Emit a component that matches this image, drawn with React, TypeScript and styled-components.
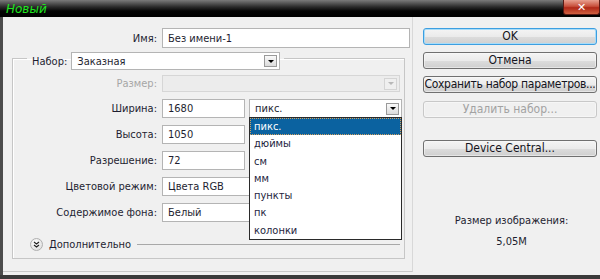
import React from 'react';
import styled, { createGlobalStyle, css } from 'styled-components';

const GlobalStyle = createGlobalStyle`
  html, body {
    margin: 0;
    padding: 0;
    background: #3c3c3c;
  }
  body {
    font-family: "DejaVu Sans Condensed", "DejaVu Sans", sans-serif;
    font-size: 11px;
    color: #1e1e30;
  }
`;

const units = ['пикс.', 'дюймы', 'см', 'мм', 'пункты', 'пк', 'колонки'];

const Window = styled.div`
  width: 600px;
  height: 279px;
  display: flex;
  flex-direction: column;
  background: #3a3a3a;
  overflow: hidden;
`;

const TitleBar = styled.div`
  height: 17px;
  flex-shrink: 0;
  display: flex;
  align-items: flex-start;
  justify-content: space-between;
  background: linear-gradient(#7a7a7a 0px, #2a2a2a 7px, #050505 11px, #000 17px);
`;

const Title = styled.span`
  padding: 2px 0 0 6px;
  color: #1ee61e;
  font-family: "DejaVu Sans", sans-serif;
  font-style: italic;
  font-size: 12px;
  line-height: 14px;
`;

const CloseButton = styled.div`
  width: 37px;
  height: 15px;
  display: flex;
  align-items: center;
  justify-content: center;
  border-radius: 0 0 3px 3px;
  border: 1px solid #5a1a14;
  border-top: none;
  box-sizing: border-box;
  background: linear-gradient(#e8a090, #c8503c 45%, #b02818 55%, #d06040);
  color: #fff;
  font-family: "DejaVu Sans", sans-serif;
  font-weight: bold;
  font-size: 11px;
`;

const Frame = styled.div`
  flex: 1;
  display: flex;
  margin-bottom: 4px;
  background: #f0f0f0;
  border-left: 3px solid #4c4c4c;
`;

const LeftPanel = styled.div`
  width: 410px;
  box-sizing: border-box;
  padding-top: 11px;
  border-right: 1px solid #d8d8d8;
  border-bottom: 1px solid #c8c8c8;
  margin-bottom: 3px;
  display: flex;
  flex-direction: column;
`;

const Row = styled.div<{ $h?: number }>`
  display: grid;
  grid-template-columns: 144px auto auto;
  column-gap: 5px;
  align-items: center;
  height: ${(p) => p.$h ?? 19}px;
  justify-content: start;
`;

const NameRow = styled(Row)`
  grid-template-columns: 154px 248px;
  height: 20px;
`;

const Label = styled.span<{ $disabled?: boolean }>`
  text-align: right;
  white-space: nowrap;
  color: ${(p) => (p.$disabled ? '#a6a6a6' : '#1e1e30')};
`;

const Field = styled.div<{ $w: number; $disabled?: boolean }>`
  width: ${(p) => p.$w}px;
  height: 100%;
  box-sizing: border-box;
  display: flex;
  align-items: center;
  justify-content: space-between;
  padding: 0 2px 0 5px;
  background: ${(p) => (p.$disabled ? '#ececec' : '#fff')};
  border: 1px solid ${(p) => (p.$disabled ? '#d6d6d6' : '#b4b4b4')};
  white-space: nowrap;
  overflow: hidden;
`;

const ArrowBox = styled.span<{ $disabled?: boolean }>`
  width: 13px;
  height: 12px;
  box-sizing: border-box;
  display: flex;
  align-items: center;
  justify-content: center;
  border: 1px solid ${(p) => (p.$disabled ? '#d4d4d4' : '#9a9a9a')};
  background: ${(p) => (p.$disabled ? '#efefef' : 'linear-gradient(#fafafa, #dcdcdc)')};
  &::after {
    content: '';
    border-left: 3px solid transparent;
    border-right: 3px solid transparent;
    border-top: 3px solid ${(p) => (p.$disabled ? '#b8b8b8' : '#000')};
  }
`;

const Group = styled.fieldset`
  margin: -1px 7px 0 9px;
  padding: 0;
  border: 1px solid #c6c6c6;
  box-shadow: inset 1px 1px 0 #fff;
  height: 212px;
  box-sizing: border-box;
  min-width: 0;
`;

const Legend = styled.legend`
  margin-left: 14px;
  padding: 5px 4px 0 5px;
  display: flex;
  align-items: center;
  gap: 4px;
  height: 18px;
  box-sizing: content-box;
`;

const SetField = styled(Field)`
  height: 18px;
`;

const Rows = styled.div`
  margin-top: 5px;
  display: flex;
  flex-direction: column;
  gap: 7px;
`;

const UnitWrap = styled.div`
  position: relative;
  height: 100%;
  margin-left: -1px;
`;

const List = styled.ul`
  position: absolute;
  top: 18px;
  left: 0;
  width: 153px;
  margin: 0;
  padding: 0;
  list-style: none;
  background: #fff;
  border: 1px solid #2a2a2a;
  box-sizing: border-box;
  z-index: 2;
`;

const Item = styled.li<{ $selected?: boolean }>`
  height: 17.3px;
  line-height: 17px;
  padding-left: 4px;
  color: #1e1e40;
  ${(p) =>
    p.$selected &&
    css`
      background: #0b62a0;
      color: #fff;
      outline: 1px dotted #d0a060;
      outline-offset: -1px;
    `}
`;

const MoreRow = styled.div`
  display: flex;
  align-items: center;
  gap: 6px;
  margin: 16px 0 0 17px;
`;

const Chevron = styled.span`
  width: 11px;
  height: 11px;
  border-radius: 50%;
  background: radial-gradient(circle at 40% 35%, #fff, #d8d8d8);
  border: 1px solid #b0b0b0;
  display: flex;
  align-items: center;
  justify-content: center;
`;

const Rule = styled.span`
  flex: 1;
  height: 1px;
  margin-right: 4px;
  background: #a8a8a8;
`;

const RightPanel = styled.div`
  flex: 1;
  padding: 11px 3px 0 10px;
  display: flex;
  flex-direction: column;
  align-items: stretch;
`;

const Button = styled.div<{ $primary?: boolean; $disabled?: boolean; $gap?: number; $tight?: boolean }>`
  height: 17px;
  margin-top: ${(p) => p.$gap ?? 7}px;
  box-sizing: border-box;
  border: 1px solid ${(p) => (p.$primary ? '#3c9ee0' : p.$disabled ? '#c8c8c8' : '#707070')};
  border-radius: 3px;
  background: ${(p) =>
    p.$disabled ? '#f0f0f0' : 'linear-gradient(#f4f4f4 0%, #ebebeb 50%, #dddddd 51%, #cfcfcf 100%)'};
  box-shadow: ${(p) => (p.$primary ? 'inset 0 0 0 1px #a8dcf8' : 'inset 0 0 0 1px #fcfcfc80')};
  color: ${(p) => (p.$disabled ? '#a2a2a2' : '#141420')};
  font-size: 12px;
  line-height: 15px;
  letter-spacing: ${(p) => (p.$tight ? '-0.3px' : 'normal')};
  display: flex;
  justify-content: center;
  white-space: nowrap;
  overflow: hidden;
  &:first-child {
    margin-top: 0;
  }
`;

const SizeInfo = styled.div`
  margin-top: 57px;
  display: flex;
  flex-direction: column;
  align-items: center;
  gap: 8px;
  padding-left: 3px;
  line-height: 13px;
`;

export default function App() {
  return (
    <>
      <GlobalStyle />
      <Window>
        <TitleBar>
          <Title>Новый</Title>
          <CloseButton>✕</CloseButton>
        </TitleBar>
        <Frame>
          <LeftPanel>
            <NameRow>
              <Label>Имя:</Label>
              <Field $w={248}>Без имени-1</Field>
            </NameRow>
            <Group>
              <Legend>
                <span>Набор:</span>
                <SetField $w={209}>
                  Заказная
                  <ArrowBox />
                </SetField>
              </Legend>
              <Rows>
                <Row $h={17}>
                  <Label $disabled>Размер:</Label>
                  <Field $w={238} $disabled>
                    <span />
                    <ArrowBox $disabled />
                  </Field>
                </Row>
                <Row>
                  <Label>Ширина:</Label>
                  <Field $w={83}>1680</Field>
                  <UnitWrap>
                    <Field $w={153}>
                      пикс.
                      <ArrowBox />
                    </Field>
                    <List>
                      {units.map((u, i) => (
                        <Item key={u} $selected={i === 0}>
                          {u}
                        </Item>
                      ))}
                    </List>
                  </UnitWrap>
                </Row>
                <Row>
                  <Label>Высота:</Label>
                  <Field $w={83}>1050</Field>
                </Row>
                <Row>
                  <Label>Разрешение:</Label>
                  <Field $w={83}>72</Field>
                </Row>
                <Row>
                  <Label>Цветовой режим:</Label>
                  <Field $w={110}>Цвета RGB</Field>
                </Row>
                <Row>
                  <Label>Содержимое фона:</Label>
                  <Field $w={110}>Белый</Field>
                </Row>
              </Rows>
              <MoreRow>
                <Chevron>
                  <svg width="7" height="7" viewBox="0 0 7 7">
                    <path d="M1 1 L3.5 3 L6 1 M1 4 L3.5 6 L6 4" stroke="#222" strokeWidth="1.2" fill="none" />
                  </svg>
                </Chevron>
                <span>Дополнительно</span>
                <Rule />
              </MoreRow>
            </Group>
          </LeftPanel>
          <RightPanel>
            <Button $primary>OK</Button>
            <Button>Отмена</Button>
            <Button $tight>Сохранить набор параметров...</Button>
            <Button $disabled $gap={8}>Удалить набор...</Button>
            <Button $gap={22}>Device Central...</Button>
            <SizeInfo>
              <span>Размер изображения:</span>
              <span>5,05M</span>
            </SizeInfo>
          </RightPanel>
        </Frame>
      </Window>
    </>
  );
}
